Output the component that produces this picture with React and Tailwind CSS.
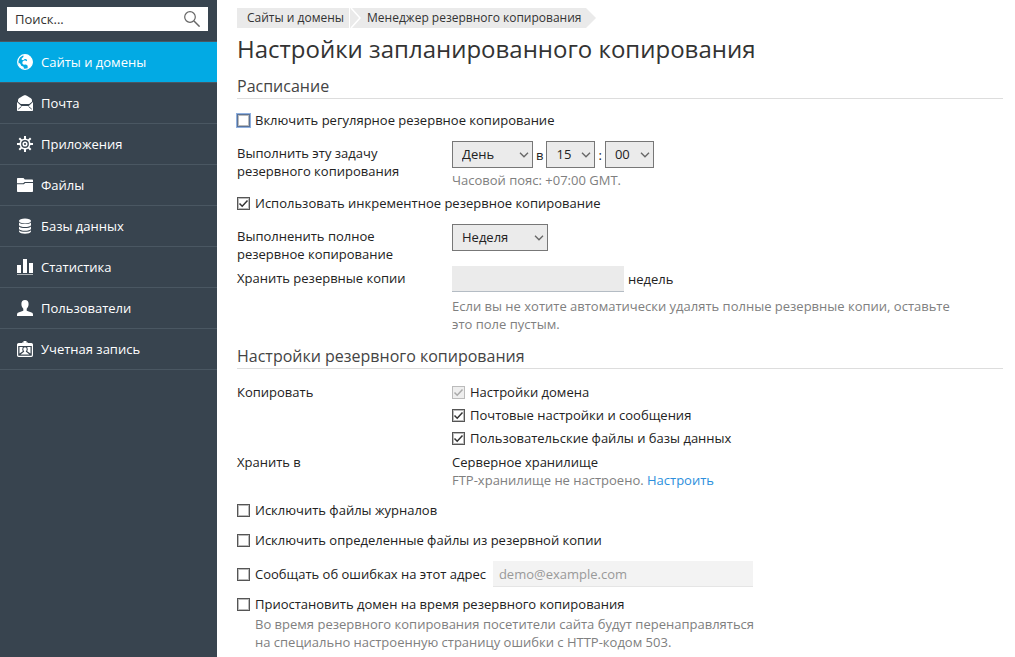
import { useState } from 'react';

const GlobeIcon = () => (
  <svg viewBox="0 0 16 16" className="w-4 h-4" fill="none">
    <circle cx="8" cy="8" r="7.3" stroke="currentColor" strokeWidth="1.3" />
    <path
      fill="currentColor"
      d="M6.5.9 10 .8l3.2 1.700L15.200 6l.2 3-1.400 3.300-2.200 1.800-1.300-.4.2-2-1.700-1.200-2.300.2-1.500-1.500.6-2L8 6.300l1.400.9.8-.8-1-1.400L7.700 5 6.300 6.200 4.600 5.800l.2-1.500L6.400 3z"
    />
    <path fill="currentColor" d="m1.300 8.500 2 1.300.9 1.900 2.300 1 .6 2.200-3-.8-2-2.300z" />
  </svg>
);

const MailIcon = () => (
  <svg viewBox="0 0 16 16" className="w-4 h-4" fill="currentColor">
    <path d="M8 0c.5 0 6.500 3.400 6.700 4 .3.800.3 1.800.3 2.700L12.200 9H3.800L1 6.700c0-.9 0-1.900.3-2.700C1.500 3.400 7.500 0 8 0z" />
    <path d="M0 7l4.300 4h7.400L16 7v8c0 .6-.4 1-1 1H1c-.6 0-1-.4-1-1z" />
    <path d="m1.200 14.200 3.200-2.600M14.800 14.200l-3.200-2.600" stroke="#38444f" strokeWidth=".9" />
  </svg>
);

const GearIcon = () => (
  <svg viewBox="0 0 16 16" className="w-4 h-4" fill="none" stroke="currentColor">
    <circle cx="8" cy="8" r="4.700" strokeWidth="1.600" />
    <circle cx="8" cy="8" r="1.800" strokeWidth="1.500" />
    <path
      strokeWidth="2"
      d="M8 0v3M8 13v3M0 8h3M13 8h3M2.300 2.300l2.100 2.100M11.600 11.600l2.100 2.100M2.300 13.700l2.100-2.100M11.600 4.400l2.100-2.100"
    />
  </svg>
);

const FolderIcon = () => (
  <svg viewBox="0 0 16 16" className="w-4 h-4" fill="currentColor">
    <path d="M0 2c0-.6.4-1 1-1h5.500l1.300 1.500H15c.6 0 1 .4 1 1V5H7.600L6.200 6.200H0z" />
    <path d="M0 7.200h6.800L8.200 6H16v8c0 .6-.4 1-1 1H1c-.6 0-1-.4-1-1z" />
  </svg>
);

const DatabaseIcon = () => (
  <svg viewBox="0 0 16 16" className="w-4 h-4" fill="currentColor">
    <ellipse cx="8" cy="3" rx="6" ry="2.400" />
    <path d="M2 4.600c1.600 2 10.400 2 12 0v2.600c-1 2.400-11 2.400-12 0z" />
    <path d="M2 8.500c1.600 2 10.400 2 12 0v2.400c-1 2.400-11 2.400-12 0z" />
    <path d="M2 12.200c1.600 2 10.400 2 12 0v1.200c-1 3-11 3-12 0z" />
  </svg>
);

const ChartIcon = () => (
  <svg viewBox="0 0 16 16" className="w-4 h-4" fill="currentColor">
    <path d="M0 6h4v8H0zM6 0h4v14H6zM12 4h4v10h-4z" />
    <path d="M0 15h16v1H0z" opacity=".6" />
  </svg>
);

const UserIcon = () => (
  <svg viewBox="0 0 16 16" className="w-4 h-4" fill="currentColor">
    <path d="M8 0c2.400 0 3.600 1.600 3.600 4 0 2-.8 3.800-1.900 4.700v2.100l4.800 1.800c1 .4 1.500 1 1.500 2.400v1H0v-1c0-1.400.5-2 1.500-2.400l4.800-1.800V8.700C5.200 7.800 4.400 6 4.400 4 4.400 1.600 5.600 0 8 0z" />
  </svg>
);

const BadgeIcon = () => (
  <svg viewBox="0 0 16 16" className="w-4 h-4" fill="none">
    <rect x=".6" y="2.600" width="14.800" height="12.700" rx="1" stroke="currentColor" strokeWidth="1.200" />
    <path fill="currentColor" d="M1 3h14v2H1zM6.500 0h3v1.500H11V4H5V1.500h1.500z" />
    <path fill="currentColor" d="M2.500 6h3.300l-.6 2.500.6 1.700-3.300 2.300zM13.500 6h-3.300l.6 2.500-.6 1.700 3.300 2.300z" />
    <path
      fill="currentColor"
      d="M8 6.300c1.100 0 1.700.8 1.700 1.900 0 .9-.4 1.500-.8 1.900v.7l3.600 2.700h-9l3.600-2.700v-.7c-.4-.4-.8-1-.8-1.900 0-1.100.6-1.900 1.700-1.900z"
    />
  </svg>
);

const NAV_ITEMS = [
  { label: 'Сайты и домены', icon: GlobeIcon, active: true },
  { label: 'Почта', icon: MailIcon },
  { label: 'Приложения', icon: GearIcon },
  { label: 'Файлы', icon: FolderIcon },
  { label: 'Базы данных', icon: DatabaseIcon },
  { label: 'Статистика', icon: ChartIcon },
  { label: 'Пользователи', icon: UserIcon },
  { label: 'Учетная запись', icon: BadgeIcon },
];

function Sidebar() {
  return (
    <aside className="w-[217px] shrink-0 bg-[#38444f]">
      <form className="flex items-center h-6 ml-[7px] mr-[9px] mt-[7px] mb-[10px] px-2 bg-white" onSubmit={(e) => e.preventDefault()}>
        <input
          type="text"
          aria-label="Поиск"
          placeholder="Поиск..."
          className="flex-1 min-w-0 text-[#222] placeholder:text-[#333] outline-none"
        />
        <button type="submit" aria-label="Найти" className="text-[#666]">
          <svg viewBox="0 0 16 16" className="w-4 h-4" fill="none" stroke="currentColor">
            <circle cx="6" cy="6" r="5.300" strokeWidth="1.200" />
            <path d="m10 10 5.600 5.600" strokeWidth="1.500" />
          </svg>
        </button>
      </form>
      <nav className="border-t border-[#4a5762]">
        {NAV_ITEMS.map(({ label, icon: Icon, active }) => (
          <a
            key={label}
            href="#"
            className={`flex items-center gap-2 h-[41px] pl-[17px] text-white border-b border-[#4a5762] ${
              active ? 'bg-[#02aae4]' : ''
            }`}
          >
            <Icon />
            {label}
          </a>
        ))}
      </nav>
    </aside>
  );
}

function Breadcrumbs() {
  return (
    <nav className="flex h-5 text-xs leading-5 text-[#333]">
      <a href="#" className="pl-[10px] pr-[5px] bg-[#eaeaea]">Сайты и домены</a>
      <svg viewBox="0 0 13 20" className="w-[13px] h-5">
        <path d="M1 0h12v20H1z" fill="#eaeaea" />
        <path d="m2 0 9 10-9 10" fill="none" stroke="#fff" strokeWidth="1.500" />
      </svg>
      <a href="#" className="pl-[5px] pr-1 bg-[#eaeaea]">Менеджер резервного копирования</a>
      <svg viewBox="0 0 10 20" className="w-[10px] h-5">
        <path d="m0 0 10 10L0 20z" fill="#eaeaea" />
      </svg>
    </nav>
  );
}

function Checkbox({ label, checked = false, disabled, focused }) {
  const [on, setOn] = useState(checked);
  return (
    <label className="flex items-center gap-[5px]">
      <span className="grid place-items-center">
        <input
          type="checkbox"
          checked={on}
          disabled={disabled}
          onChange={(e) => setOn(e.target.checked)}
          className={`peer col-start-1 row-start-1 appearance-none w-[13px] h-[13px] border disabled:border-[#bbb] disabled:bg-[#eee] ${
            focused ? 'border-[#5b7397] outline outline-[#8fb0e0]' : 'border-[#555]'
          } ${disabled ? '' : 'shadow-[inset_0_0_0_1px_#bbb]'}`}
        />
        <svg
          viewBox="0 0 13 13"
          fill="none"
          stroke="currentColor"
          strokeWidth="1.500"
          className="col-start-1 row-start-1 w-[13px] h-[13px] text-[#333] peer-disabled:text-[#aaa] invisible peer-checked:visible pointer-events-none"
        >
          <path d="m2.500 6.500 2.700 2.700 5.300-5.700" />
        </svg>
      </span>
      {label}
    </label>
  );
}

function Select({ id, label, options, className }) {
  return (
    <span className="inline-grid items-center align-top">
      <select
        id={id}
        aria-label={label}
        className={`col-start-1 row-start-1 appearance-none h-[27px] pl-[9px] pb-px border border-[#777] bg-[#ebebeb] text-[#222] ${className}`}
      >
        {options.map((o) => (
          <option key={o}>{o}</option>
        ))}
      </select>
      <svg
        viewBox="0 0 10 6"
        fill="none"
        stroke="#666"
        strokeWidth="1.300"
        className="col-start-1 row-start-1 justify-self-end w-[10px] h-[6px] mr-1 pointer-events-none"
      >
        <path d="m1 .8 4 4 4-4" />
      </svg>
    </span>
  );
}

function SectionTitle({ children }) {
  return <h2 className="pb-px border-b border-[#ddd] text-base leading-[22px] text-[#444]">{children}</h2>;
}

function Row({ label, htmlFor, children, className = '' }) {
  return (
    <div className={`grid grid-cols-[195px_1fr] gap-x-5 ${className}`}>
      {htmlFor ? <label htmlFor={htmlFor} className="pt-[3px]">{label}</label> : <div>{label}</div>}
      <div>{children}</div>
    </div>
  );
}

export default function App() {
  return (
    <div className="flex min-h-screen bg-white font-['Open_Sans',sans-serif] text-[13px] leading-[18px] text-[#222]">
      <Sidebar />
      <main className="flex-1 min-w-0 pt-2 pl-5 pr-3">
        <Breadcrumbs />
        <h1 className="mt-[5px] mb-[10px] text-2xl leading-8 text-[#333]">Настройки запланированного копирования</h1>

        {/* Расписание */}
        <SectionTitle>Расписание</SectionTitle>
        <div className="mt-3 mb-3">
          <Checkbox label="Включить регулярное резервное копирование" focused />
        </div>
        <Row label="Выполнить эту задачу резервного копирования" htmlFor="period">
          <div className="flex items-center gap-[3px]">
            <Select id="period" options={['День', 'Неделя', 'Месяц']} className="w-[81px]" />
            <span>в</span>
            <Select label="Часы" options={['15', '16', '17']} className="w-[49px]" />
            <span>:</span>
            <Select label="Минуты" options={['00', '15', '30', '45']} className="w-[49px]" />
          </div>
          <p className="mt-[3px] text-[#808080]">Часовой пояс: +07:00 GMT.</p>
        </Row>
        <div className="mt-[5px] mb-3">
          <Checkbox label="Использовать инкрементное резервное копирование" checked />
        </div>
        <Row label="Выполненить полное резервное копирование" htmlFor="full">
          <Select id="full" options={['Неделя', 'Месяц']} className="w-24" />
        </Row>
        <Row label="Хранить резервные копии" htmlFor="keep" className="mt-[3px]">
          <div className="flex items-center gap-1">
            <input id="keep" type="text" className="w-[172px] h-[26px] px-2 bg-[#ebebeb] border-b border-[#b4bcc4] outline-none" />
            <span>недель</span>
          </div>
          <p className="mt-[5px] max-w-[510px] text-[#808080]">
            Если вы не хотите автоматически удалять полные резервные копии, оставьте это поле пустым.
          </p>
        </Row>

        {/* Настройки резервного копирования */}
        <div className="mt-3 mb-[14px]">
          <SectionTitle>Настройки резервного копирования</SectionTitle>
        </div>
        <Row label="Копировать">
          <div className="flex flex-col gap-[5px]">
            <Checkbox label="Настройки домена" checked disabled />
            <Checkbox label="Почтовые настройки и сообщения" checked />
            <Checkbox label="Пользовательские файлы и базы данных" checked />
          </div>
        </Row>
        <Row label="Хранить в" className="mt-[6px]">
          <p>Серверное хранилище</p>
          <p className="text-[#808080]">
            FTP-хранилище не настроено. <a href="#" className="text-[#2c8fdd]">Настроить</a>
          </p>
        </Row>
        <div className="flex flex-col gap-3 mt-3">
          <Checkbox label="Исключить файлы журналов" />
          <Checkbox label="Исключить определенные файлы из резервной копии" />
          <div className="flex items-center gap-[7px]">
            <Checkbox label="Сообщать об ошибках на этот адрес" />
            <input
              type="email"
              aria-label="Адрес для сообщений об ошибках"
              placeholder="demo@example.com"
              className="w-[260px] h-[26px] px-[6px] bg-[#f3f3f3] border-b border-[#e5e5e5] placeholder:text-[#999] outline-none"
            />
          </div>
        </div>
        <div className="mt-2">
          <Checkbox label="Приостановить домен на время резервного копирования" />
          <p className="mt-[2px] ml-[18px] max-w-[510px] text-[#808080]">
            Во время резервного копирования посетители сайта будут перенаправляться на специально настроенную страницу ошибки с HTTP-кодом 503.
          </p>
        </div>
      </main>
    </div>
  );
}
